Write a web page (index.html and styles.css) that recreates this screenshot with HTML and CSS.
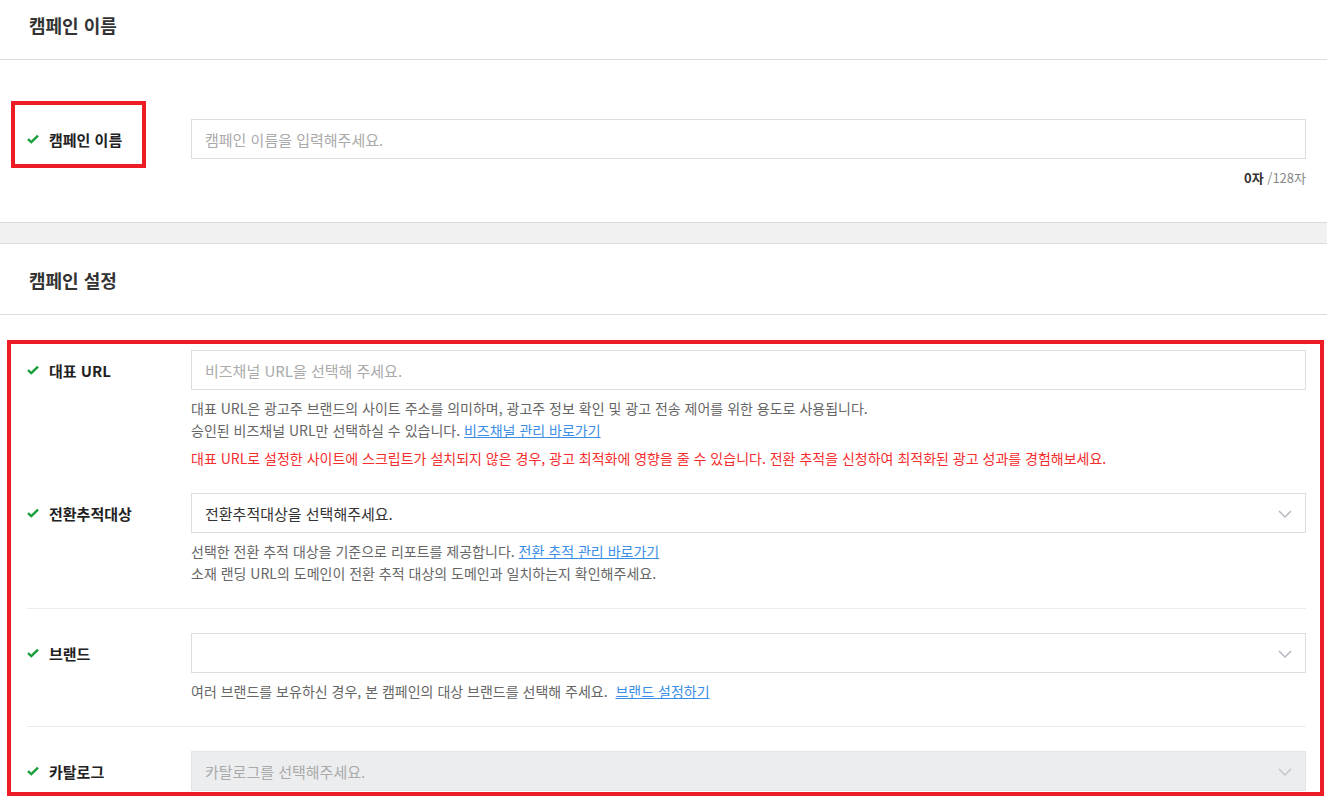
FILE: index.html
```html
<!DOCTYPE html>
<html lang="ko">
<head>
  <meta charset="UTF-8" />
  <title>캠페인 만들기</title>
  <link rel="stylesheet" href="styles.css">
</head>
<body>
  <div class="page">

    <div class="section">
      <div class="section-head">캠페인 이름</div>
      <div class="section-body name-body">
        <div class="row">
          <div class="label">
            <svg class="check" width="12" height="10" viewBox="0 0 12 10"><path d="M1 5.2 L4.3 8.2 L11 1.6" fill="none" stroke="#1a9e3a" stroke-width="2.4"/></svg>
            캠페인 이름
          </div>
          <div class="field">
            <div class="input placeholder">캠페인 이름을 입력해주세요.</div>
            <div class="counter"><b>0자</b> /128자</div>
          </div>
        </div>
      </div>
    </div>

    <div class="section">
      <div class="section-head">캠페인 설정</div>
      <div class="section-body">

        <div class="row">
          <div class="label">
            <svg class="check" width="12" height="10" viewBox="0 0 12 10"><path d="M1 5.2 L4.3 8.2 L11 1.6" fill="none" stroke="#1a9e3a" stroke-width="2.4"/></svg>
            대표 URL
          </div>
          <div class="field">
            <div class="input placeholder">비즈채널 URL을 선택해 주세요.</div>
            <div class="help">
              대표 URL은 광고주 브랜드의 사이트 주소를 의미하며, 광고주 정보 확인 및 광고 전송 제어를 위한 용도로 사용됩니다.<br>
              승인된 비즈채널 URL만 선택하실 수 있습니다. <a href="#">비즈채널 관리 바로가기</a>
            </div>
            <div class="help warn">대표 URL로 설정한 사이트에 스크립트가 설치되지 않은 경우, 광고 최적화에 영향을 줄 수 있습니다. 전환 추적을 신청하여 최적화된 광고 성과를 경험해보세요.</div>
          </div>
        </div>

        <div class="row">
          <div class="label">
            <svg class="check" width="12" height="10" viewBox="0 0 12 10"><path d="M1 5.2 L4.3 8.2 L11 1.6" fill="none" stroke="#1a9e3a" stroke-width="2.4"/></svg>
            전환추적대상
          </div>
          <div class="field">
            <div class="input select">
              전환추적대상을 선택해주세요.
              <svg class="chevron" width="14" height="8" viewBox="0 0 14 8"><path d="M1 1 L7 7 L13 1" fill="none" stroke="#b5b9bf" stroke-width="1.5"/></svg>
            </div>
            <div class="help">
              선택한 전환 추적 대상을 기준으로 리포트를 제공합니다. <a href="#">전환 추적 관리 바로가기</a><br>
              소재 랜딩 URL의 도메인이 전환 추적 대상의 도메인과 일치하는지 확인해주세요.
            </div>
          </div>
        </div>

        <div class="row divided">
          <div class="label">
            <svg class="check" width="12" height="10" viewBox="0 0 12 10"><path d="M1 5.2 L4.3 8.2 L11 1.6" fill="none" stroke="#1a9e3a" stroke-width="2.4"/></svg>
            브랜드
          </div>
          <div class="field">
            <div class="input select">
              <svg class="chevron" width="14" height="8" viewBox="0 0 14 8"><path d="M1 1 L7 7 L13 1" fill="none" stroke="#b5b9bf" stroke-width="1.5"/></svg>
            </div>
            <div class="help">여러 브랜드를 보유하신 경우, 본 캠페인의 대상 브랜드를 선택해 주세요. &nbsp;<a href="#">브랜드 설정하기</a></div>
          </div>
        </div>

        <div class="row divided">
          <div class="label">
            <svg class="check" width="12" height="10" viewBox="0 0 12 10"><path d="M1 5.2 L4.3 8.2 L11 1.6" fill="none" stroke="#1a9e3a" stroke-width="2.4"/></svg>
            카탈로그
          </div>
          <div class="field">
            <div class="input select disabled placeholder">
              카탈로그를 선택해주세요.
              <svg class="chevron" width="14" height="8" viewBox="0 0 14 8"><path d="M1 1 L7 7 L13 1" fill="none" stroke="#c3c6cb" stroke-width="1.5"/></svg>
            </div>
          </div>
        </div>

      </div>
    </div>

  </div>

  <div class="mark mark-name"></div>
  <div class="mark mark-settings"></div>
</body>
</html>
```

FILE: styles.css
```css
body {
  margin: 0;
  padding: 0;
  background: #f1f1f1;
  font-family: "Noto Sans CJK KR", "Noto Sans", sans-serif;
  color: #222;
  position: relative;
  height: 796px;
  overflow: hidden;
}

.page {
  margin-top: -11px;
}

.section {
  background: #fff;
  border-top: 1px solid #dcdcdc;
  border-bottom: 1px solid #dcdcdc;
  margin-bottom: 20px;
}

.section:first-child {
  border-top: none;
}

.section-head {
  padding: 24px 29px 22px;
  font-size: 18px;
  line-height: 24px;
  font-weight: bold;
  color: #333;
  border-bottom: 1px solid #dcdcdc;
}

.section-body {
  padding: 35px 21px 0 27px;
}

.name-body {
  padding-top: 59px;
  padding-bottom: 35px;
}

.row {
  display: flex;
  padding-bottom: 24px;
}

.name-body .row {
  padding: 0;
}

.divided {
  border-top: 1px solid #ececec;
  padding-top: 24px;
}

.label {
  width: 164px;
  flex-shrink: 0;
  height: 40px;
  display: flex;
  align-items: center;
  font-size: 15px;
  font-weight: bold;
  color: #222;
}

.check {
  margin-right: 10px;
}

.field {
  flex: 1;
}

.input {
  height: 38px;
  border: 1px solid #dcdde0;
  padding: 0 13px;
  display: flex;
  align-items: center;
  font-size: 15px;
  color: #333;
  position: relative;
}

.placeholder {
  color: #aaa;
}

.select .chevron {
  position: absolute;
  right: 13px;
  top: 16px;
}

.disabled {
  background: #ecedef;
  border-color: #e4e5e8;
}

.counter {
  margin-top: 10px;
  text-align: right;
  font-size: 13px;
  line-height: 18px;
  color: #888;
}

.counter b {
  color: #333;
}

.help {
  margin-top: 7px;
  font-size: 14px;
  line-height: 22px;
  color: #666;
}

.help a {
  color: #3a8ee6;
  text-decoration: underline;
}

.help.warn {
  margin-top: 6px;
  color: #f42d2d;
}

.mark {
  position: absolute;
  border: 4px solid #ee1c25;
}

.mark-name {
  left: 11px;
  top: 101px;
  width: 127px;
  height: 59px;
}

.mark-settings {
  left: 7px;
  top: 340px;
  width: 1309px;
  height: 448px;
}
```
